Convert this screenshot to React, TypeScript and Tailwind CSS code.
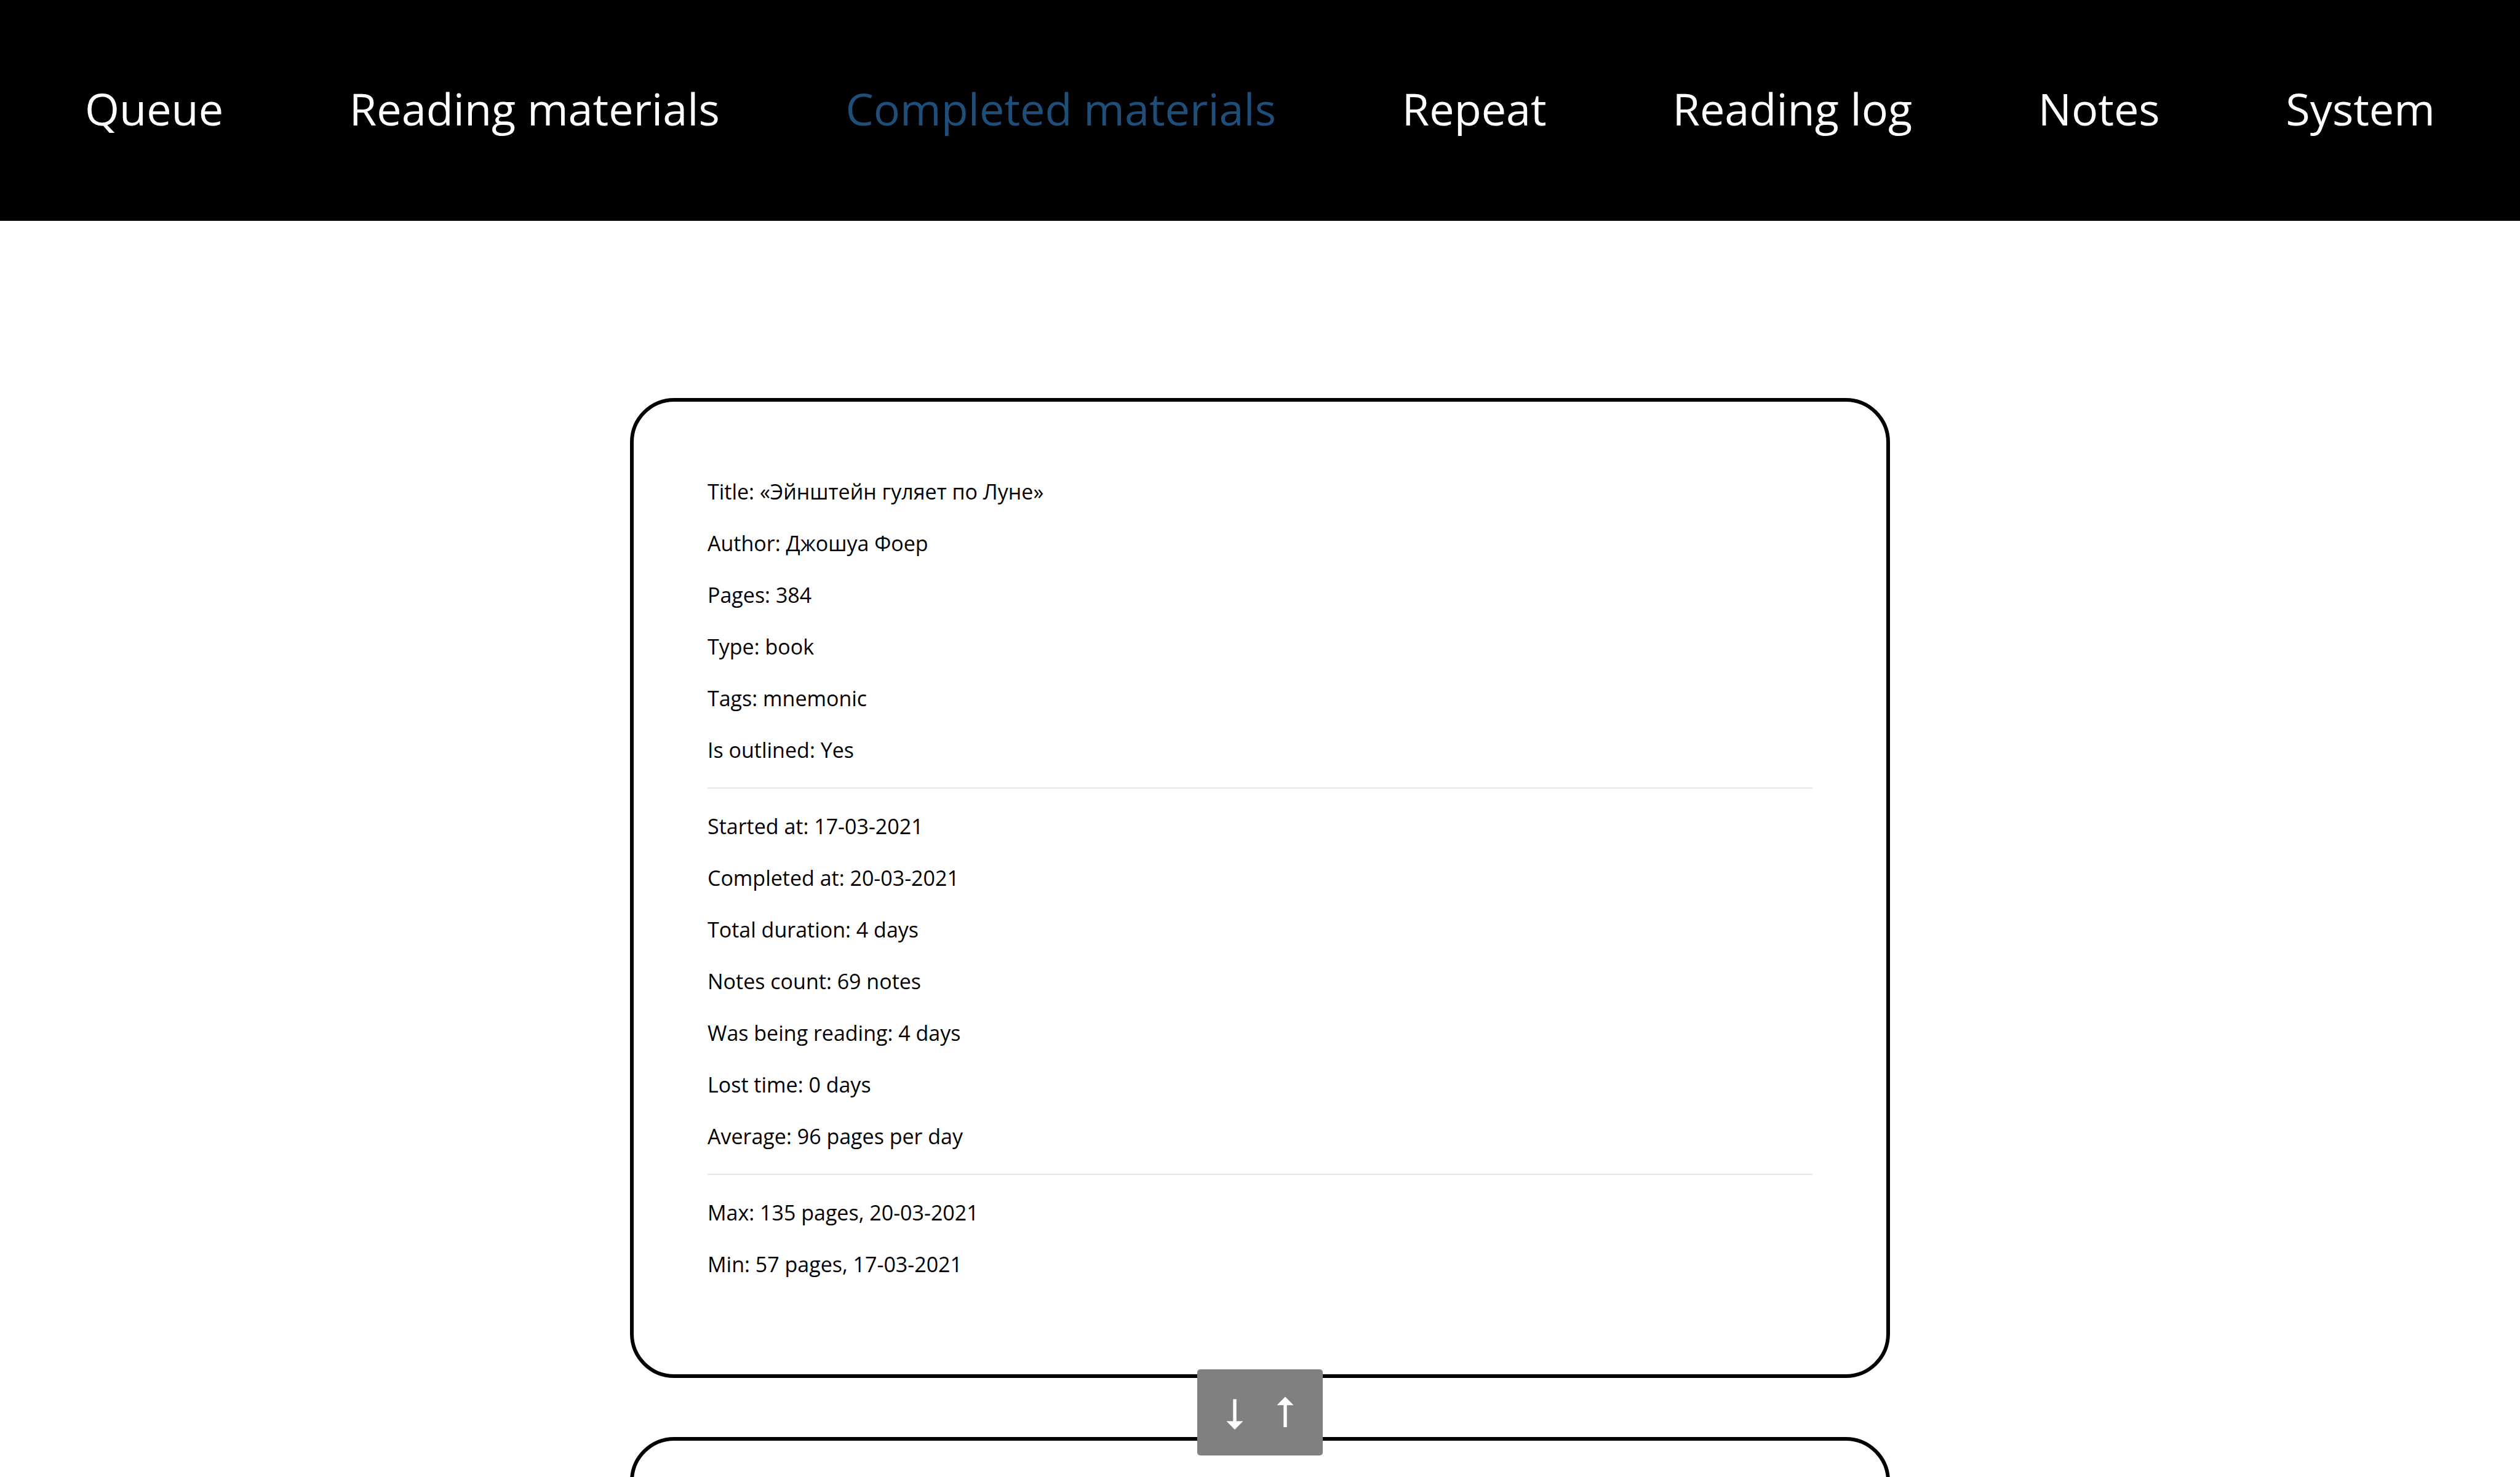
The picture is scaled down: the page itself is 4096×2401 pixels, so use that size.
const navItems = [
  'Queue',
  'Reading materials',
  'Completed materials',
  'Repeat',
  'Reading log',
  'Notes',
  'System',
];

const activeItem = 'Completed materials';

const sections: [string, string][][] = [
  [
    ['Title', '«Эйнштейн гуляет по Луне»'],
    ['Author', 'Джошуа Фоер'],
    ['Pages', '384'],
    ['Type', 'book'],
    ['Tags', 'mnemonic'],
    ['Is outlined', 'Yes'],
  ],
  [
    ['Started at', '17-03-2021'],
    ['Completed at', '20-03-2021'],
    ['Total duration', '4 days'],
    ['Notes count', '69 notes'],
    ['Was being reading', '4 days'],
    ['Lost time', '0 days'],
    ['Average', '96 pages per day'],
  ],
  [
    ['Max', '135 pages, 20-03-2021'],
    ['Min', '57 pages, 17-03-2021'],
  ],
];

function Header() {
  return (
    <header className="bg-black">
      <nav className="flex justify-between whitespace-nowrap px-[138px] pt-[127px] pb-[134px] text-7xl/[98px]">
        {navItems.map((item) => (
          <a
            key={item}
            href="#"
            aria-current={item === activeItem ? 'page' : undefined}
            className={item === activeItem ? 'text-[#1f4e79]' : 'text-white'}
          >
            {item}
          </a>
        ))}
      </nav>
    </header>
  );
}

function MaterialCard({ groups }: { groups: [string, string][][] }) {
  return (
    <article className="min-h-[300px] shrink-0 rounded-[72px] border-6 border-black px-[120px] pt-[123px] pb-[156px]">
      {groups.map((rows, index) => (
        <div key={rows[0][0]}>
          {index > 0 && <hr className="my-[38px] border-t-2 border-[#e6e6e6]" />}
          <div className="flex flex-col gap-[38px]">
            {rows.map(([label, value]) => (
              <p key={label}>
                {label}: {value}
              </p>
            ))}
          </div>
        </div>
      ))}
    </article>
  );
}

function ScrollButtons() {
  return (
    <div className="fixed bottom-[35px] left-1/2 flex h-[140px] w-[204px] -translate-x-1/2 items-center justify-between rounded-[5px] bg-[#808080] px-[47px]">
      <button type="button" aria-label="Scroll to bottom">
        <svg width="28" height="56" viewBox="0 0 28 56" fill="white">
          <path d="M11.3 6.5h5.4v35.8h10.8L14 56 .5 42.3h10.8z" />
        </svg>
      </button>
      <button type="button" aria-label="Scroll to top">
        <svg width="28" height="56" viewBox="0 0 28 56" fill="white">
          <path d="M14 2.5l13.5 13.8H16.7V52h-5.4V16.3H.5z" />
        </svg>
      </button>
    </div>
  );
}

export default function App() {
  return (
    <div className="flex h-screen flex-col overflow-hidden bg-white font-['Open_Sans',sans-serif] text-black">
      <Header />
      <main className="mx-auto flex w-1/2 flex-col gap-24 pt-72 text-[34px]/[46px]">
        <MaterialCard groups={sections} />
        <MaterialCard groups={[]} />
      </main>
      <ScrollButtons />
    </div>
  );
}
